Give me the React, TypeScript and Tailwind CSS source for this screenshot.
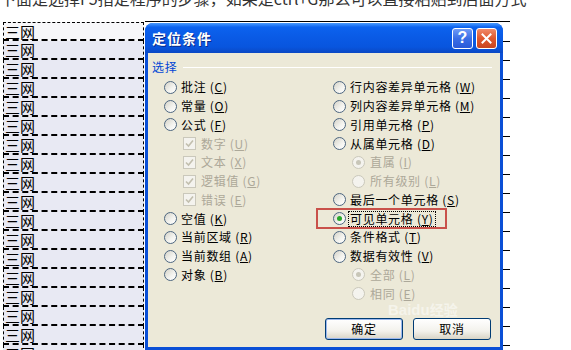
import React from "react";

type Item = {
  t: string;
  k: string;
  sub?: boolean;
  check?: boolean;
  checked?: boolean;
  disabled?: boolean;
  highlight?: boolean;
};

const leftItems: Item[] = [
  { t: "批注", k: "C" },
  { t: "常量", k: "O" },
  { t: "公式", k: "F" },
  { t: "数字", k: "U", sub: true, check: true, disabled: true },
  { t: "文本", k: "X", sub: true, check: true, disabled: true },
  { t: "逻辑值", k: "G", sub: true, check: true, disabled: true },
  { t: "错误", k: "E", sub: true, check: true, disabled: true },
  { t: "空值", k: "K" },
  { t: "当前区域", k: "R" },
  { t: "当前数组", k: "A" },
  { t: "对象", k: "B" },
];

const rightItems: Item[] = [
  { t: "行内容差异单元格", k: "W" },
  { t: "列内容差异单元格", k: "M" },
  { t: "引用单元格", k: "P" },
  { t: "从属单元格", k: "D" },
  { t: "直属", k: "I", sub: true, checked: true, disabled: true },
  { t: "所有级别", k: "L", sub: true, disabled: true },
  { t: "最后一个单元格", k: "S" },
  { t: "可见单元格", k: "Y", checked: true, highlight: true },
  { t: "条件格式", k: "T" },
  { t: "数据有效性", k: "V" },
  { t: "全部", k: "L", sub: true, checked: true, disabled: true },
  { t: "相同", k: "E", sub: true, disabled: true },
];

function Radio({ checked, disabled }: { checked?: boolean; disabled?: boolean }) {
  return (
    <span
      className={
        disabled
          ? "w-[13px] h-[13px] shrink-0 rounded-full border border-[#cac8bb] bg-[#f4f3ee] flex items-center justify-center"
          : "w-[13px] h-[13px] shrink-0 rounded-full border border-[#4d6680] bg-[linear-gradient(135deg,#d4d2c8_0%,#f4f4f0_60%,#ffffff_100%)] flex items-center justify-center"
      }
    >
      {checked ? (
        <span
          className={
            disabled
              ? "w-[5px] h-[5px] rounded-full bg-[#c8c6b8]"
              : "w-[5px] h-[5px] rounded-full bg-[#2aa82a]"
          }
        />
      ) : null}
    </span>
  );
}

function Check() {
  return (
    <span className="w-[13px] h-[13px] shrink-0 border border-[#cac8bb] bg-[#f4f3ee] flex items-center justify-center">
      <svg width="9" height="9" viewBox="0 0 9 9">
        <path d="M1 4.5 L3.5 7 L8 1.5" fill="none" stroke="#c2bfae" strokeWidth="1.6" />
      </svg>
    </span>
  );
}

function Row({ it }: { it: Item }) {
  const label = (
    <span
      className={
        it.disabled
          ? "text-[#aca899] whitespace-nowrap"
          : "text-black whitespace-nowrap"
      }
    >
      {it.t} (<span className="underline">{it.k}</span>)
    </span>
  );
  return (
    <div
      className={
        it.sub
          ? "h-[18.75px] flex items-center pl-[19px] gap-[5px] relative"
          : "h-[18.75px] flex items-center gap-[4px] relative"
      }
    >
      {it.check ? <Check /> : <Radio checked={it.checked} disabled={it.disabled} />}
      {it.highlight ? (
        <span className="border border-dotted border-black leading-[14px] px-[1px] -ml-[2px]">{label}</span>
      ) : (
        label
      )}
      {it.highlight ? (
        <span className="absolute left-[-17px] top-[-1px] w-[131px] h-[21px] border-2 border-[#c9514a]" />
      ) : null}
    </div>
  );
}

function Cells({ n }: { n: number }) {
  return (
    <div className="flex flex-col pt-[1px]">
      {Array.from({ length: n }).map((_, i) => (
        <div
          key={i}
          className={
            i === 0
              ? "ml-[3px] w-[141px] h-[19px] shrink-0 border-x border-t border-b-2 border-dashed border-black bg-[#f7f7f9] flex items-center pl-[1px] text-[15px] leading-[15px] text-black"
              : "ml-[3px] w-[141px] h-[19px] shrink-0 border-x border-b-2 border-dashed border-black bg-[#e8e9f3] flex items-center pl-[1px] text-[15px] leading-[15px] text-black"
          }
        >
          三网
        </div>
      ))}
    </div>
  );
}

export default function App() {
  return (
    <div className="w-[571px] h-[350px] overflow-hidden bg-white font-['Noto_Sans_CJK_SC','Noto_Sans_CJK_SC',sans-serif]">
      <div className="h-[21px] overflow-hidden whitespace-nowrap text-[16px] text-[#333]">
        <div className="-mt-[14px] leading-[24px]">
          下面是选择F5指定程序的步骤，如果是ctrl+G那么可以直接粘贴到后面方式
        </div>
      </div>
      <div className="flex h-[329px]">
        <div className="w-[145px] shrink-0 overflow-hidden">
          <Cells n={18} />
        </div>
        <div className="w-[358px] shrink-0 border-t border-black pt-[1px] flex flex-col">
          <div className="flex-1 flex flex-col rounded-t-[8px] overflow-hidden bg-[#0a4fd6]">
            <div className="h-[30px] shrink-0 flex items-center pl-[7px] pr-[6px] bg-[linear-gradient(180deg,#4a9cff_0%,#0c62ee_14%,#0a5be6_45%,#0855de_80%,#0a48c4_100%)]">
              <span className="text-white font-bold text-[14px] tracking-[1px] flex-1 [text-shadow:1px_1px_0_#0a2a8a]">
                定位条件
              </span>
              <div className="flex gap-[3px]">
                <div className="w-[21px] h-[21px] rounded-[3px] border border-white bg-[linear-gradient(180deg,#6f9bf6_0%,#3a6ee6_50%,#2a5ad8_100%)] flex items-center justify-center text-white font-bold text-[16px] leading-none font-['Liberation_Sans',sans-serif]">
                  ?
                </div>
                <div className="w-[21px] h-[21px] rounded-[3px] border border-white bg-[linear-gradient(180deg,#f08a6a_0%,#e0582e_50%,#c84520_100%)] flex items-center justify-center">
                  <svg width="11" height="11" viewBox="0 0 11 11">
                    <path d="M1.5 1.5 L9.5 9.5 M9.5 1.5 L1.5 9.5" stroke="white" strokeWidth="2" strokeLinecap="square" />
                  </svg>
                </div>
              </div>
            </div>
            <div className="flex-1 mx-[3px] mb-[3px] bg-[#ece9d8] relative text-[12px] tracking-[0.7px] flex flex-col">
              <div className="flex items-center pl-[4px] pr-[8px] pt-[6px] h-[22px]">
                <span className="text-[#0046d5] text-[12px]">选择</span>
                <div className="flex-1 ml-[6px] h-[1px] bg-[#d0d0bf] border-b border-white" />
              </div>
              <div className="flex pt-[3px] pl-[16px]">
                <div className="w-[169px] flex flex-col">
                  {leftItems.map((it, i) => (
                    <Row key={i} it={it} />
                  ))}
                </div>
                <div className="flex flex-col">
                  {rightItems.map((it, i) => (
                    <Row key={i} it={it} />
                  ))}
                </div>
              </div>
              <div className="absolute left-[240px] top-[249px] text-white/50 font-bold text-[15px] leading-none tracking-normal font-['Liberation_Sans',sans-serif] whitespace-nowrap">
                Baidu<span className="text-[14px] font-['Noto_Sans_CJK_SC',sans-serif]">经验</span>
              </div>
              <div className="mt-auto mb-[7px] flex justify-end gap-[10px] pr-[9px]">
                <div className="w-[78px] h-[22px] rounded-[3px] border border-[#003c74] bg-[linear-gradient(180deg,#ffffff_0%,#f3f2ec_60%,#d8d4c6_100%)] flex items-center justify-center shadow-[inset_0_0_0_1px_#9cb8ee]">
                  确定
                </div>
                <div className="w-[78px] h-[22px] rounded-[3px] border border-[#003c74] bg-[linear-gradient(180deg,#ffffff_0%,#f3f2ec_60%,#d8d4c6_100%)] flex items-center justify-center">
                  取消
                </div>
              </div>
            </div>
          </div>
        </div>
        <div className="flex-1">
          <div className="w-[7px] border-t border-black pt-[1px]">
            {Array.from({ length: 17 }).map((_, i) => (
              <div key={i} className="h-[19px] border-b border-black" />
            ))}
          </div>
        </div>
      </div>
    </div>
  );
}
